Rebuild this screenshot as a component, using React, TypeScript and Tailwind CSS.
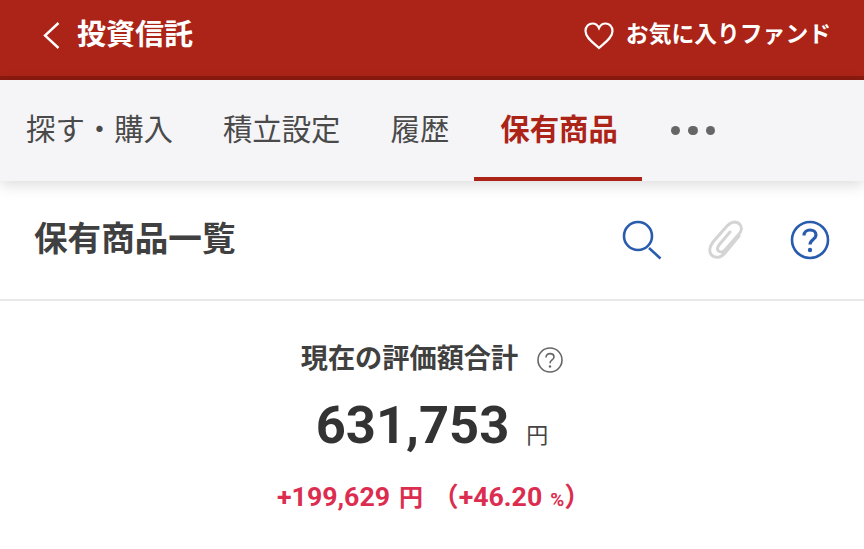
const tabs = ['探す・購入', '積立設定', '履歴'];

export default function App() {
  return (
    <div className="w-[864px] h-[549px] overflow-hidden bg-white text-[#333] font-['Roboto','Noto_Sans_CJK_JP',sans-serif]">
      {/* header */}
      <header className="h-[80px] bg-[#ab2417] border-b-[4px] border-[#8a1a10] flex items-center justify-between pl-[42px] pr-[33px] text-white">
        <div className="flex items-center gap-[16px] -mt-[5px]">
          <svg width="19" height="30" viewBox="0 0 19 30" fill="none" stroke="white" strokeWidth="2.4">
            <path d="M16.5 2 L3 14.5 L16.5 27" />
          </svg>
          <span className="text-[29px] font-bold leading-none">投資信託</span>
        </div>
        <div className="flex items-center gap-[12px] -mt-[5px]">
          <svg width="30" height="28" viewBox="0 0 30 28" fill="none" stroke="white" strokeWidth="2.2">
            <path d="M15 26 C10 21 1.5 16 1.5 9 C1.5 4.5 4.8 1.5 8.5 1.5 C11 1.5 13.6 2.8 15 6 C16.4 2.8 19 1.5 21.5 1.5 C25.2 1.5 28.5 4.5 28.5 9 C28.5 16 20 21 15 26 Z" />
          </svg>
          <span className="text-[22.8px] font-bold leading-none">お気に入りファンド</span>
        </div>
      </header>

      {/* tabs */}
      <nav className="h-[101px] bg-[#f5f5f8] flex pl-[1px] shadow-[0_4px_14px_rgba(0,0,0,0.14)] relative">
        {tabs.map((t) => (
          <div key={t} className="px-[25px] flex items-center text-[29.4px] leading-none text-[#4a4a4a] pt-[1px]">
            {t}
          </div>
        ))}
        <div className="pl-[26px] pr-[24px] flex items-center text-[29.4px] font-bold leading-none text-[#ab2417] border-b-[4px] border-[#ab2417] pt-[4px]">
          保有商品
        </div>
        <div className="flex items-center gap-[8px] ml-[29px]">
          <span className="w-[9.5px] h-[9.5px] rounded-full bg-[#666]" />
          <span className="w-[9.5px] h-[9.5px] rounded-full bg-[#666]" />
          <span className="w-[9.5px] h-[9.5px] rounded-full bg-[#666]" />
        </div>
      </nav>

      {/* title row */}
      <div className="h-[120px] border-b-2 border-[#e8e8e8] flex items-center justify-between pl-[34px] pr-[34px]">
        <h1 className="text-[33.6px] font-bold leading-none text-[#404040]">保有商品一覧</h1>
        <div className="flex items-center gap-[46px]">
          <svg width="40" height="40" viewBox="0 0 40 40" fill="none" stroke="#2a5cad" strokeWidth="2.6">
            <circle cx="16" cy="16" r="14" />
            <path d="M27 28 L38.5 38.5" />
          </svg>
          <svg width="36" height="40" viewBox="0 0 36 40" fill="none" stroke="#d4d4d4" strokeWidth="3" strokeLinecap="round">
            <path d="M31 16 L17 33 C13 38 6.5 38.5 3.5 35 C0.5 31.5 2 26 5 22 L19 6 C23 1.5 28 1 31.5 4 C34.5 7 33.5 11 31 14 L17 30 C15 32.5 12 32.5 10.5 31 C9 29.5 9.5 27 11 25 L22 12" />
          </svg>
          <svg width="40" height="40" viewBox="0 0 40 40" fill="none" stroke="#2a5cad" strokeWidth="2.6">
            <circle cx="20" cy="20" r="18" />
            <path d="M14 15.5 C14 12 16.8 10 20 10 C23.2 10 26 12 26 15 C26 19.5 20 19.5 20 24.5" strokeWidth="3.2" />
            <circle cx="20" cy="30" r="2.2" fill="#2a5cad" stroke="none" />
          </svg>
        </div>
      </div>

      {/* summary */}
      <section className="flex flex-col items-center">
        <div className="flex items-center gap-[19px] mt-[43px] h-[32px]">
          <span className="text-[27.2px] font-bold leading-none text-[#404040]">現在の評価額合計</span>
          <svg width="26" height="26" viewBox="0 0 26 26" fill="none" stroke="#666" strokeWidth="1.6">
            <circle cx="13" cy="13" r="12" />
            <path d="M9 10.5 C9 8 10.8 6.6 13 6.6 C15.2 6.6 17 8 17 10 C17 13 13 13 13 16.2" />
            <circle cx="13" cy="19.5" r="1.2" fill="#666" stroke="none" />
          </svg>
        </div>
        <div className="flex items-baseline gap-[17px] mt-[19px]">
          <span className="text-[52.5px] font-bold leading-[60px] text-[#333]">631,753</span>
          <span className="text-[22px] leading-none text-[#444]">円</span>
        </div>
        <div className="mt-[29px] ml-[4px] text-[#dc2d50] text-[26.7px] font-bold leading-none flex items-baseline">
          <span>+199,629</span>
          <span className="font-bold text-[24px] ml-[9px]">円</span>
          <span className="ml-[9px] font-bold">（</span>
          <span>+46.20</span>
          <span className="font-bold text-[19px] ml-[8px]">%</span>
          <span className="font-bold">）</span>
        </div>
      </section>
    </div>
  );
}
